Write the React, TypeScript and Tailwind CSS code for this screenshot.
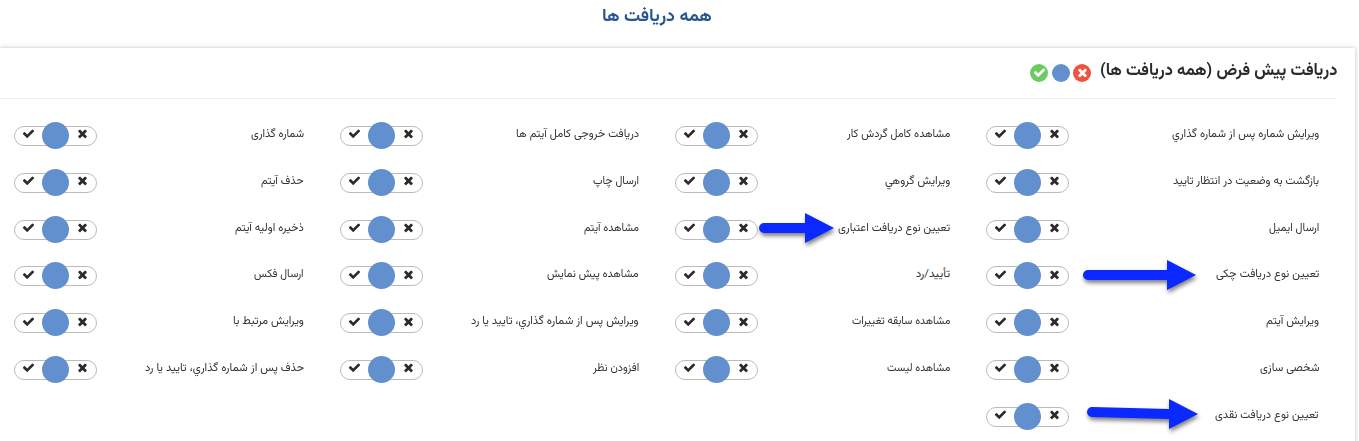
import { useLayoutEffect, useRef } from "react";

type Item = { label: string; width: number };

const columns: Item[][] = [
  [
    { label: "ویرایش شماره پس از شماره گذاري", width: 147 },
    { label: "بازگشت به وضعیت در انتظار تایید", width: 146 },
    { label: "ارسال ایمیل", width: 50 },
    { label: "تعیین نوع دریافت چکی", width: 103 },
    { label: "ویرایش آیتم", width: 53 },
    { label: "شخصی سازی", width: 59 },
    { label: "تعیین نوع دریافت نقدی", width: 104 },
  ],
  [
    { label: "مشاهده کامل گردش کار", width: 103 },
    { label: "ویرایش گروهي", width: 65 },
    { label: "تعیین نوع دریافت اعتباری", width: 112 },
    { label: "تأیید/رد", width: 34 },
    { label: "مشاهده سابقه تغییرات", width: 98 },
    { label: "مشاهده لیست", width: 63 },
  ],
  [
    { label: "دریافت خروجی کامل آیتم ها", width: 123 },
    { label: "ارسال چاپ", width: 46 },
    { label: "مشاهده آیتم", width: 55 },
    { label: "مشاهده پیش نمایش", width: 92 },
    { label: "ویرایش پس از شماره گذاري، تایید یا رد", width: 168 },
    { label: "افزودن نظر", width: 46 },
  ],
  [
    { label: "شماره گذاری", width: 53 },
    { label: "حذف آیتم", width: 43 },
    { label: "ذخیره اولیه آیتم", width: 69 },
    { label: "ارسال فکس", width: 50 },
    { label: "ویرایش مرتبط با", width: 71 },
    { label: "حذف پس از شماره گذاري، تایید یا رد", width: 159 },
  ],
];

/* Condenses a line of text so that it fills exactly the given width. */
function FitText({ text, width, className }: { text: string; width: number; className: string }) {
  const ref = useRef<HTMLSpanElement>(null);
  useLayoutEffect(() => {
    const el = ref.current;
    if (el) el.style.transform = `scaleX(${width / el.offsetWidth})`;
  }, [text, width]);
  return (
    <span className="flex shrink-0 justify-start" style={{ width }}>
      <span ref={ref} className={`inline-block shrink-0 origin-right whitespace-nowrap ${className}`}>
        {text}
      </span>
    </span>
  );
}

function Check({ className }: { className: string }) {
  return (
    <svg viewBox="0 0 1792 1792" fill="currentColor" className={className}>
      <path d="M1671 566q0 40-28 68l-724 724-136 136q-28 28-68 28t-68-28l-136-136-362-362q-28-28-28-68t28-68l136-136q28-28 68-28t68 28l294 295 656-657q28-28 68-28t68 28l136 136q28 28 28 68z" />
    </svg>
  );
}

function Times({ className }: { className: string }) {
  return (
    <svg viewBox="0 0 1792 1792" fill="currentColor" className={className}>
      <path d="M1490 1322q0 40-28 68l-136 136q-28 28-68 28t-68-28l-294-294-294 294q-28 28-68 28t-68-28l-136-136q-28-28-28-68t28-68l294-294-294-294q-28-28-28-68t28-68l136-136q28-28 68-28t68 28l294 294 294-294q28-28 68-28t68 28l136 136q28 28 28 68t-28 68l-294 294 294 294q28 28 28 68z" />
    </svg>
  );
}

function Toggle() {
  return (
    <div dir="ltr" className="flex h-5 w-[83px] shrink-0 items-center justify-between rounded-full border border-[#bbb] pr-[7px] pl-[7px] text-[#2b2b2b]">
      <Check className="mb-[4px] size-[13px]" />
      <span className="-my-1 mt-[-5px] size-[27px] rounded-full bg-[#6290cf]" />
      <Times className="mb-[4px] size-[13px]" />
    </div>
  );
}

function Arrow({ className, length, tilt = 0 }: { className: string; length: number; tilt?: number }) {
  const neck = length - 29;
  return (
    <svg
      className={`absolute overflow-visible drop-shadow-[1px_3px_2px_rgba(0,0,0,0.5)] ${className}`}
      width={length}
      height="30"
      fill="#0a28ff"
    >
      <path
        d={`M5 ${10 - tilt}L${neck} 10V0L${length} 15L${neck} 30V20L5 ${20 - tilt}A5 5 0 0 1 5 ${10 - tilt}Z`}
      />
    </svg>
  );
}

export default function App() {
  return (
    <div
      dir="rtl"
      className="relative flex h-[441px] w-[1359px] flex-col overflow-hidden bg-[#fefefe] font-['Vazirmatn','Noto_Sans_Arabic','DejaVu_Sans',sans-serif] text-[#333]"
    >
      <h1 className="flex h-12 shrink-0 justify-center pt-[4px] pr-[45px] text-[17.5px] leading-[26px] font-bold text-[#285590]">
        <FitText text="همه دریافت ها" width={110} className="" />
      </h1>

      <main className="mr-1 h-[420px] shrink-0 bg-white pr-[18px] shadow-[0_0_4px_rgba(0,0,0,0.25)]">
        <header className="flex h-[51px] border-b border-[#ececec]">
          <h2 className="pt-[10px] text-[17px] leading-[26px] font-bold text-[#2b2b2b]">
            <FitText text="دریافت پیش فرض (همه دریافت ها)" width={237} className="" />
          </h2>
          <div className="mr-[9px] flex gap-[3.5px] pt-[16px] text-white">
            <span className="flex size-[18px] items-center justify-center rounded-full bg-[#ef5340]">
              <Times className="mb-[2px] size-[13px]" />
            </span>
            <span className="size-[18px] rounded-full bg-[#6290cf]" />
            <span className="flex size-[18px] items-center justify-center rounded-full bg-[#6bcb62]">
              <Check className="mb-[2px] size-[13px]" />
            </span>
          </div>
        </header>

        <div className="grid grid-cols-[333px_275px_299px_290px] gap-x-[36px] pt-[13.6px] pr-[18px]">
          {columns.map((items, index) => (
            <section key={index}>
              {items.map((item) => (
                <div key={item.label} className="flex h-[46.8px] items-center justify-between">
                  <div className="pb-[4px]">
                    <FitText text={item.label} width={item.width} className="text-[11.5px] leading-5" />
                  </div>
                  <Toggle />
                </div>
              ))}
            </section>
          ))}
        </div>
      </main>

      <Arrow className="top-[213px] left-[759px]" length={75} />
      <Arrow className="top-[260px] left-[1083px]" length={113} />
      <Arrow className="top-[399px] left-[1087px]" length={111} tilt={2} />
    </div>
  );
}
